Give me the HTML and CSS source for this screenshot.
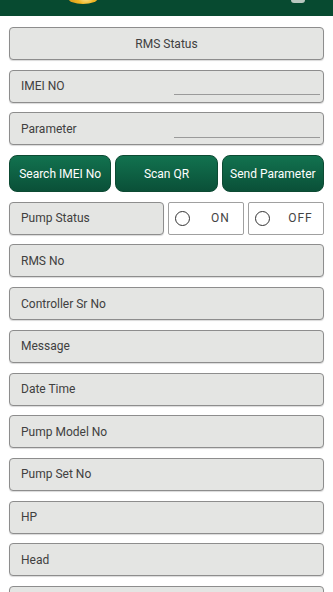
FILE: index.html
```html
<!DOCTYPE html>
<html lang="en">
<head>
  <meta charset="UTF-8" />
  <meta name="viewport" content="width=device-width, initial-scale=1.0" />
  <title>RMS Status</title>
  <link rel="stylesheet" href="styles.css">
</head>
<body>
  <div class="topbar">
    <div class="logo"></div>
    <div class="top-icon"></div>
  </div>

  <main class="page">
    <div class="field title">RMS Status</div>

    <div class="field input-field">
      <span>IMEI NO</span>
      <span class="line"></span>
    </div>

    <div class="field input-field">
      <span>Parameter</span>
      <span class="line"></span>
    </div>

    <div class="btn-row">
      <button class="btn">Search IMEI No</button>
      <button class="btn">Scan QR</button>
      <button class="btn">Send Parameter</button>
    </div>

    <div class="status-row">
      <div class="field status-label">Pump Status</div>
      <label class="radio"><span class="dot"></span><span class="radio-text">ON</span></label>
      <label class="radio"><span class="dot"></span><span class="radio-text">OFF</span></label>
    </div>

    <div class="field">RMS No</div>
    <div class="field">Controller Sr No</div>
    <div class="field">Message</div>
    <div class="field">Date Time</div>
    <div class="field">Pump Model No</div>
    <div class="field">Pump Set No</div>
    <div class="field">HP</div>
    <div class="field">Head</div>
    <div class="field"></div>
  </main>
</body>
</html>
```

FILE: styles.css
```css
body {
  margin: 0;
  font-family: Roboto, "Liberation Sans", sans-serif;
  background-color: #ffffff;
  color: #404040;
}

.topbar {
  height: 16px;
  background-color: #074a30;
  overflow: hidden;
  display: flex;
  align-items: flex-start;
  padding: 0 28px 0 68px;
  justify-content: space-between;
}

.logo {
  width: 30px;
  height: 12px;
  margin-top: -8px;
  border-radius: 50%;
  background: radial-gradient(circle at 60% 30%, #fff6c0 0, #f2b824 45%, #d0941a 100%);
}

.top-icon {
  width: 14px;
  height: 8px;
  margin-top: -5px;
  border-radius: 3px;
  background-color: #b9c7bf;
}

.page {
  padding: 11px 9px 0 9px;
  display: flex;
  flex-direction: column;
  gap: 9.7px;
}

.field {
  height: 33px;
  box-sizing: border-box;
  background-color: #e4e5e3;
  border: 1px solid #8d8d8d;
  border-radius: 4px;
  box-shadow: 0 1px 1px rgba(0,0,0,0.15);
  display: flex;
  align-items: center;
  padding-left: 11px;
  font-size: 12px;
}

.title {
  justify-content: center;
  padding-left: 0;
}

.input-field {
  justify-content: space-between;
  padding-right: 3px;
}

.input-field .line {
  width: 146px;
  height: 1px;
  margin-top: 17px;
  background-color: #9a9a9a;
}

.btn-row {
  display: flex;
  gap: 4px;
  height: 37px;
}

.btn {
  flex: 1;
  border: 1px solid #0d4a33;
  border-radius: 8px;
  background: linear-gradient(#12724f, #0a5038);
  color: #ffffff;
  font-family: Roboto, "Liberation Sans", sans-serif;
  font-size: 12px;
  padding: 0;
}

.status-row {
  display: flex;
  gap: 4px;
  height: 33px;
}

.status-label {
  width: 155px;
}

.radio {
  flex: 1;
  box-sizing: border-box;
  border: 1px solid #a0a0a0;
  border-radius: 2px;
  background-color: #ffffff;
  display: flex;
  align-items: center;
  padding-left: 6px;
  font-size: 12px;
  letter-spacing: 1px;
  color: #444;
}

.dot {
  width: 15px;
  height: 15px;
  box-sizing: border-box;
  border: 1.5px solid #333;
  border-radius: 50%;
}

.radio-text {
  flex: 1;
  text-align: center;
  padding-left: 8px;
}
```
